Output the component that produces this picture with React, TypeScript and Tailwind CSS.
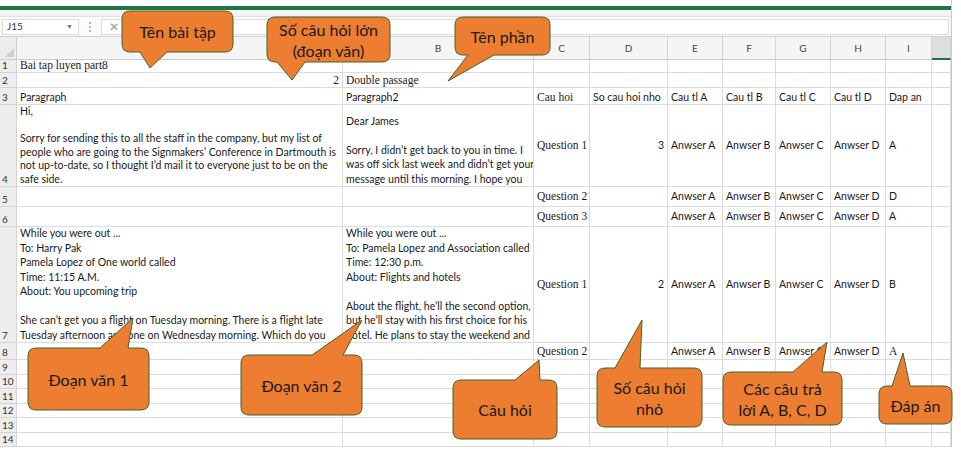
import React from 'react';

type Spec = {
  t?: string | string[];
  serif?: boolean;
  right?: boolean;
  mid?: boolean;
  tight?: boolean;
};

const SANS = "font-['Lato','Liberation_Sans',sans-serif]";
const SERIF = "font-['Liberation_Serif','Times_New_Roman',serif]";

const LETTERS = ['A', 'B', 'C', 'D', 'E', 'F', 'G', 'H', 'I', ''];

const ans = (q: string, d: string, last: string, serifLast = false): Spec[] => [
  { t: q, serif: true, mid: true },
  { t: d, right: true, mid: true },
  { t: 'Anwser A', mid: true },
  { t: 'Anwser B', mid: true },
  { t: 'Anwser C', mid: true },
  { t: 'Anwser D', mid: true },
  { t: last, mid: true, serif: serifLast },
];

const ROWS: Spec[][] = [
  [{ t: 'Bai tap luyen part8', serif: true }],
  [{ t: '2', serif: true, right: true }, { t: 'Double passage', serif: true }],
  [
    { t: 'Paragraph' },
    { t: 'Paragraph2' },
    { t: 'Cau hoi', serif: true },
    { t: 'So cau hoi nho' },
    { t: 'Cau tl A' },
    { t: 'Cau tl B' },
    { t: 'Cau tl C' },
    { t: 'Cau tl D' },
    { t: 'Dap an' },
  ],
  [
    {
      tight: true,
      t: [
        'Hi,',
        '',
        'Sorry for sending this to all the staff in the company, but my list of',
        'people who are going to the Signmakers’ Conference in Dartmouth is',
        'not up-to-date, so I thought I’d mail it to everyone just to be on the',
        'safe side.',
      ],
    },
    {
      t: [
        'Dear James',
        '',
        'Sorry, I didn’t get back to you in time. I',
        'was off sick last week and didn’t get your',
        'message until this morning. I hope you',
      ],
    },
    ...ans('Question 1', '3', 'A'),
  ],
  [{}, {}, ...ans('Question 2', '', 'D')],
  [{}, {}, ...ans('Question 3', '', 'A')],
  [
    {
      t: [
        'While you were out ...',
        'To: Harry Pak',
        'Pamela Lopez of One world called',
        'Time: 11:15 A.M.',
        'About: You upcoming trip',
        '',
        'She can’t get you a flight on Tuesday morning. There is a flight late',
        'Tuesday afternoon and one on Wednesday morning. Which do you',
      ],
    },
    {
      t: [
        'While you were out ...',
        'To: Pamela Lopez and Association called',
        'Time: 12:30 p.m.',
        'About: Flights and hotels',
        '',
        'About the flight, he’ll the second option,',
        'but he’ll stay with his first choice for his',
        'hotel. He plans to stay the weekend and',
      ],
    },
    ...ans('Question 1', '2', 'B'),
  ],
  [{}, {}, ...ans('Question 2', '', 'A', true)],
  [],
  [],
  [],
  [],
  [],
  [],
];

function Cell({ spec }: { spec: Spec }) {
  const lines = Array.isArray(spec.t) ? spec.t : spec.t ? [spec.t] : [];
  return (
    <div
      className={`min-h-0 border-r border-b border-[#dcdcdc] overflow-hidden flex flex-col px-[3px] text-[#1a1a1a] ${
        spec.mid ? 'justify-center' : 'justify-end'
      } ${spec.right ? 'items-end' : 'items-start'} ${
        spec.serif ? `${SERIF} text-[11.5px]` : `${SANS} text-[10.5px]`
      }`}
    >
      {lines.map((l, i) => (
        <div
          key={i}
          className={`whitespace-nowrap shrink-0 ${spec.tight ? 'leading-[13.5px]' : 'leading-[14.5px]'}`}
        >
          {l || '\u00a0'}
        </div>
      ))}
    </div>
  );
}

type Callout = {
  x: number;
  y: number;
  w: number;
  h: number;
  b1: number;
  b2: number;
  tip: [number, number];
  top: boolean;
  text: string[];
};

const CALLOUTS: Callout[] = [
  { x: 122, y: 11, w: 111, h: 41, b1: 140, b2: 167, tip: [150, 68], top: false, text: ['Tên bài tập'] },
  { x: 267, y: 17, w: 123, h: 45, b1: 277, b2: 305, tip: [292, 80], top: false, text: ['Số câu hỏi lớn', '(đoạn văn)'] },
  { x: 455, y: 17, w: 95, h: 38, b1: 468, b2: 494, tip: [448, 81], top: false, text: ['Tên phần'] },
  { x: 28, y: 348, w: 121, h: 62, b1: 100, b2: 128, tip: [133, 318], top: true, text: ['Đoạn văn 1'] },
  { x: 241, y: 355, w: 121, h: 60, b1: 312, b2: 343, tip: [362, 320], top: true, text: ['Đoạn văn 2'] },
  { x: 453, y: 380, w: 104, h: 59, b1: 515, b2: 540, tip: [539, 360], top: true, text: ['Câu hỏi'] },
  { x: 597, y: 368, w: 105, h: 59, b1: 615, b2: 640, tip: [642, 320], top: true, text: ['Số câu hỏi', 'nhỏ'] },
  { x: 723, y: 372, w: 119, h: 53, b1: 793, b2: 822, tip: [827, 342], top: true, text: ['Các câu trả', 'lời A, B, C, D'] },
  { x: 879, y: 386, w: 73, h: 38, b1: 892, b2: 910, tip: [903, 353], top: true, text: ['Đáp án'] },
];

function shape(c: Callout) {
  const r = 8;
  const { x, y, w, h, b1, b2, tip } = c;
  const R = x + w;
  const B = y + h;
  const topEdge = c.top
    ? `H ${b1} L ${tip[0]} ${tip[1]} L ${b2} ${y} H ${R - r}`
    : `H ${R - r}`;
  const bottomEdge = c.top
    ? `H ${x + r}`
    : `H ${b2} L ${tip[0]} ${tip[1]} L ${b1} ${B} H ${x + r}`;
  return `M ${x + r} ${y} ${topEdge} Q ${R} ${y} ${R} ${y + r} V ${B - r} Q ${R} ${B} ${R - r} ${B} ${bottomEdge} Q ${x} ${B} ${x} ${B - r} V ${y + r} Q ${x} ${y} ${x + r} ${y} Z`;
}

export default function App() {
  return (
    <div className="relative w-[961px] h-[461px] bg-white overflow-hidden">
      <div className="w-[952px] border-r border-[#c8c8c8] flex flex-col">
        {/* ribbon edge */}
        <div className="shrink-0 h-[6px] bg-white" />
        <div className="shrink-0 h-[4px] bg-[#217346]" />
        <div className="shrink-0 h-[7px] bg-[#f3f3f3] border-b border-[#e2e2e2]" />
        {/* formula bar */}
        <div className="shrink-0 h-[20px] bg-[#fbfbfb] border-b border-[#d0d0d0] flex items-center gap-[8px] px-[2px]">
          <div className={`w-[77px] h-[16px] bg-white border border-[#dcdcdc] flex items-center justify-between pl-[4px] pr-[5px] text-[10px] text-[#333] ${SANS}`}>
            <span>J15</span>
            <span className="text-[7px] text-[#777]">▼</span>
          </div>
          <div className="flex flex-col gap-[2px] w-[6px] items-center">
            <span className="w-[2px] h-[2px] bg-[#bbb]" />
            <span className="w-[2px] h-[2px] bg-[#bbb]" />
            <span className="w-[2px] h-[2px] bg-[#bbb]" />
          </div>
          <div className="flex-1 h-[16px] bg-white border border-[#dcdcdc] flex items-center pl-[7px] text-[12px] text-[#999]">
            ✕
          </div>
        </div>
        {/* sheet */}
        <div className="shrink-0 grid grid-cols-[17px_326px_191px_56px_78px_55px_53px_55px_55px_46px_19px] grid-rows-[23px_13px_15px_17px_82px_20px_20px_116px_17px_15px_14px_15px_14px_15px_14px]">
          {/* corner */}
          <div className="bg-[#ededed] border-r border-b border-[#cdcdcd] relative">
            <svg className="absolute right-[2px] bottom-[2px]" width="9" height="9">
              <polygon points="9,0 9,9 0,9" fill="#cfcfcf" />
            </svg>
          </div>
          {LETTERS.map((l, i) => (
            <div
              key={i}
              className={`border-r border-[#d4d4d4] flex items-center justify-center text-[10px] text-[#444] ${SANS} ${
                i === 9 ? 'bg-[#dedede] border-b-2 border-b-[#217346]' : 'bg-[#f5f5f5] border-b border-b-[#cdcdcd]'
              }`}
            >
              {l}
            </div>
          ))}
          {ROWS.map((row, ri) => (
            <React.Fragment key={ri}>
              <div
                className={`min-h-0 overflow-hidden bg-[#ededed] border-r border-b border-[#d4d4d4] flex items-end pl-[2px] text-[10px] leading-[14px] text-[#333] ${SANS}`}
              >
                {ri + 1}
              </div>
              {Array.from({ length: 10 }).map((_, ci) => (
                <Cell key={ci} spec={row[ci] ?? {}} />
              ))}
            </React.Fragment>
          ))}
        </div>
      </div>

      {/* callouts */}
      <svg className="absolute left-0 top-0 pointer-events-none" width="961" height="461">
        {CALLOUTS.map((c, i) => (
          <path key={i} d={shape(c)} fill="#ED7D31" stroke="#41652a" strokeWidth="1" />
        ))}
      </svg>
      {CALLOUTS.map((c, i) => (
        <div
          key={i}
          className={`absolute flex flex-col items-center justify-center text-[16px] leading-[21px] text-[#1a1a1a] ${SANS}`}
          style={{ left: c.x, top: c.y, width: c.w, height: c.h }}
        >
          {c.text.map((t, j) => (
            <div key={j} className="whitespace-nowrap">
              {t}
            </div>
          ))}
        </div>
      ))}
    </div>
  );
}
